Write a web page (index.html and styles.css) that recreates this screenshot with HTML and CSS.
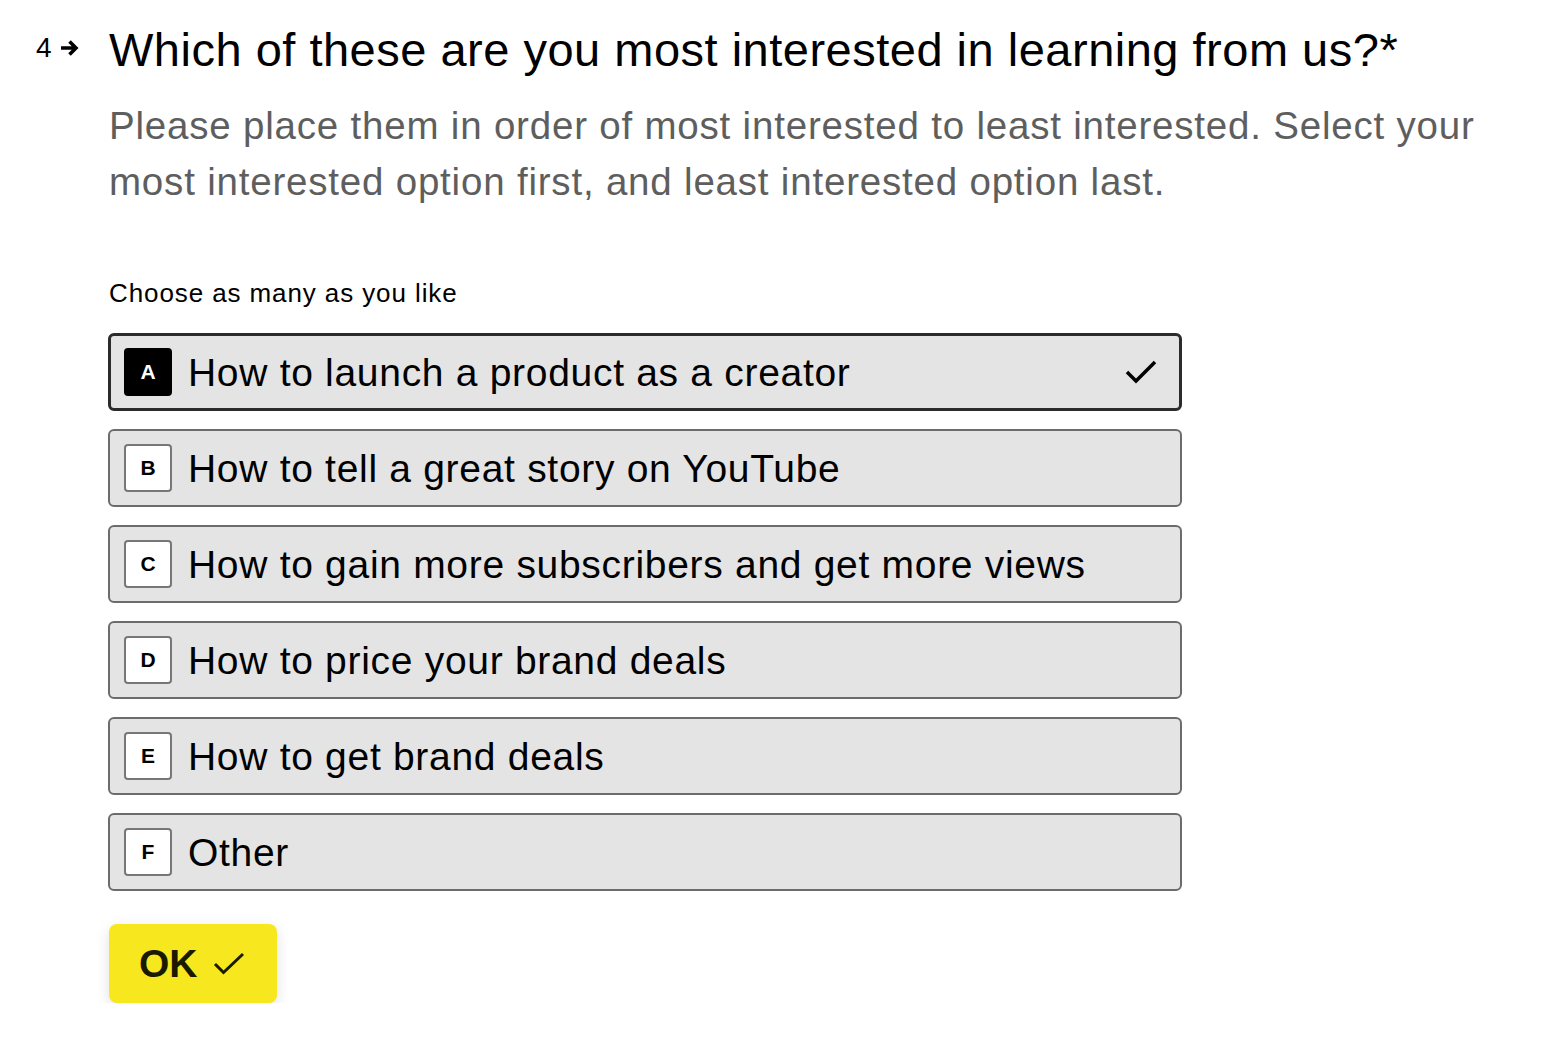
FILE: index.html
```html
<!DOCTYPE html>
<html>
<head>
<meta charset="utf-8">
<link rel="stylesheet" href="styles.css">
</head>
<body>
<div class="question">
  <div class="qnum">
    <span class="num">4</span>
    <svg class="arrow" width="20" height="18" viewBox="0 0 20 18"><path d="M1 9h15M9.5 2.5L16 9l-6.5 6.5" fill="none" stroke="#000" stroke-width="3.6" stroke-linecap="butt" stroke-linejoin="miter"/></svg>
  </div>
  <div class="content">
    <h1 class="title">Which of these are you most interested in learning from us?*</h1>
    <p class="desc">Please place them in order of most interested to least interested. Select your most interested option first, and least interested option last.</p>
    <div class="hint">Choose as many as you like</div>
    <div class="options">
      <div class="option selected"><span class="key">A</span><span class="label">How to launch a product as a creator</span>
        <svg class="check" width="34" height="26" viewBox="0 0 34 26"><path d="M3 13l9 9L31 3" fill="none" stroke="#000" stroke-width="3.5"/></svg>
      </div>
      <div class="option"><span class="key">B</span><span class="label">How to tell a great story on YouTube</span></div>
      <div class="option"><span class="key">C</span><span class="label">How to gain more subscribers and get more views</span></div>
      <div class="option"><span class="key">D</span><span class="label">How to price your brand deals</span></div>
      <div class="option"><span class="key">E</span><span class="label">How to get brand deals</span></div>
      <div class="option"><span class="key">F</span><span class="label">Other</span></div>
    </div>
    <button class="ok">OK <svg class="okcheck" width="32" height="24" viewBox="0 0 32 24"><path d="M2 12l8.5 8.5L30 2" fill="none" stroke="#1a1a00" stroke-width="3"/></svg></button>
  </div>
</div>
</body>
</html>
```
FILE: styles.css
```css
* { box-sizing: border-box; }
body {
  margin: 0;
  background: #fff;
  font-family: "Liberation Sans", Arial, Helvetica, sans-serif;
  color: #000;
}
.question {
  display: flex;
  padding: 24px 0 0 36px;
}
.qnum {
  width: 73px;
  display: flex;
  align-items: center;
  height: 48px;
  align-self: flex-start;
  gap: 8px;
}
.num {
  font-size: 28px;
  line-height: 1;
}
.arrow { display: block; }
.content {
  width: 1420px;
}
.title {
  margin: 0;
  font-weight: 400;
  font-size: 47px;
  letter-spacing: 0.5px;
  line-height: 52px;
}
.desc {
  margin: 22px 0 0;
  font-size: 38.5px;
  letter-spacing: 0.8px;
  line-height: 56px;
  color: #5e5e5e;
  width: 1400px;
}
.hint {
  margin-top: 67px;
  font-size: 26px;
  letter-spacing: 0.9px;
  line-height: 32px;
}
.options {
  margin-top: 24px;
  display: flex;
  flex-direction: column;
  gap: 18px;
  width: 1074px;
  margin-left: -1px;
}
.option {
  height: 78px;
  border: 2px solid #6c6c6c;
  border-radius: 6px;
  background: #e4e4e4;
  display: flex;
  align-items: center;
  padding-left: 14px;
  padding-right: 22px;
}
.option.selected {
  border: 3px solid #2b2b2b;
  padding-left: 13px;
  padding-right: 21px;
}
.key {
  width: 48px;
  height: 48px;
  flex: none;
  border: 2px solid #777;
  border-radius: 4px;
  background: #fff;
  display: flex;
  align-items: center;
  justify-content: center;
  font-weight: 700;
  font-size: 21px;
}
.selected .key {
  background: #000;
  border-color: #000;
  color: #fff;
}
.label {
  margin-left: 16px;
  font-size: 39px;
  letter-spacing: 0.7px;
  line-height: 1;
  flex: 1;
}
.check { display: block; }
.ok {
  margin-top: 33px;
  width: 168px;
  height: 79px;
  border: none;
  border-radius: 8px;
  background: #f6e71f;
  box-shadow: 0 4px 14px rgba(0,0,0,0.12);
  font-family: "Liberation Sans", Arial, sans-serif;
  font-weight: 700;
  font-size: 39px;
  color: #1a1a00;
  display: flex;
  align-items: center;
  padding: 0 0 0 30px;
  gap: 15px;
}
.okcheck { display: block; }
```
